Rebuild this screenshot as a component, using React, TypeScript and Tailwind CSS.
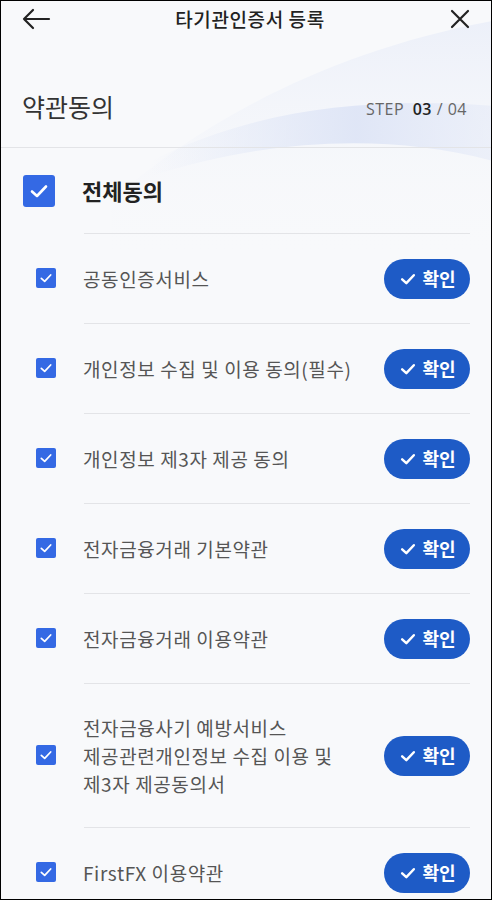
import React from 'react';

const terms: string[][] = [
  ['공동인증서비스'],
  ['개인정보 수집 및 이용 동의(필수)'],
  ['개인정보 제3자 제공 동의'],
  ['전자금융거래 기본약관'],
  ['전자금융거래 이용약관'],
  ['전자금융사기 예방서비스', '제공관련개인정보 수집 이용 및', '제3자 제공동의서'],
  ['FirstFX 이용약관'],
];

const Check = ({ size, stroke }: { size: number; stroke: number }) => (
  <svg width={size} height={size} viewBox="0 0 24 24" fill="none">
    <polyline points="5,12.5 10,17 19,7.5" stroke="white" strokeWidth={stroke} strokeLinecap="round" strokeLinejoin="round" />
  </svg>
);

const App = () => {
  return (
    <div
      className="relative w-[492px] h-[900px] overflow-hidden border border-black bg-[#f8f9fb]"
      style={{ fontFamily: '"Noto Sans CJK KR", "Noto Sans", sans-serif' }}
    >
      {/* background wave */}
      <svg className="absolute left-0 top-0 pointer-events-none" width="492" height="260" viewBox="0 0 492 260">
        <defs>
          <linearGradient id="w1" x1="0" y1="0" x2="1" y2="0">
            <stop offset="0" stopColor="#dfe6f7" stopOpacity="0" />
            <stop offset="0.6" stopColor="#dde4f6" stopOpacity="0.9" />
            <stop offset="1" stopColor="#e6ebf8" stopOpacity="0.6" />
          </linearGradient>
          <linearGradient id="w2" x1="0" y1="0" x2="0" y2="1">
            <stop offset="0" stopColor="#ebeff9" stopOpacity="0.9" />
            <stop offset="1" stopColor="#f8f9fb" stopOpacity="0" />
          </linearGradient>
        </defs>
        <path d="M110 200 C 200 120, 330 50, 492 20 L 492 260 L 110 260 Z" fill="url(#w2)" />
        <path d="M150 160 C 250 110, 360 95, 492 105 L 492 160 C 380 130, 260 140, 150 175 Z" fill="url(#w1)" />
      </svg>

      <div className="relative">
        {/* header */}
        <div className="flex items-center justify-between h-[36px] pl-[20px] pr-[20px]">
          <svg width="30" height="22" viewBox="0 0 30 22" fill="none">
            <path d="M28 11 H3 M12 2 L3 11 L12 20" stroke="#222" strokeWidth="2.2" strokeLinecap="round" strokeLinejoin="round" />
          </svg>
          <div className="text-[19px] font-medium text-[#222] tracking-[0.6px]">타기관인증서 등록</div>
          <svg width="22" height="22" viewBox="0 0 22 22" fill="none">
            <path d="M3 3 L19 19 M19 3 L3 19" stroke="#222" strokeWidth="2.2" strokeLinecap="round" />
          </svg>
        </div>

        {/* title */}
        <div className="flex items-end justify-between pl-[21px] pr-[24px] pt-[53px] pb-[25px]">
          <div className="text-[25px] text-[#333] leading-[32px]">약관동의</div>
          <div className="text-[16px] text-[#666] leading-[26px] tracking-[0.5px]" style={{ fontFamily: '"Open Sans", sans-serif' }}>
            STEP <span className="ml-[4px] font-semibold text-[#222]">03</span> / 04
          </div>
        </div>
        <div className="h-px bg-[#e3e4e7]" />

        {/* all agree */}
        <div className="flex items-center h-[85px] pl-[22px]">
          <div className="w-[32px] h-[32px] rounded-[3px] bg-[#3469e4] flex items-center justify-center">
            <Check size={24} stroke={2.6} />
          </div>
          <div className="ml-[27px] text-[22px] font-bold text-[#222]">전체동의</div>
        </div>

        {/* terms */}
        {terms.map((lines, i) => (
          <div key={i} className="flex items-stretch">
            <div className="w-[83px] shrink-0 flex items-center pl-[35px]">
              <div className="w-[20px] h-[20px] rounded-[2px] bg-[#3469e4] flex items-center justify-center">
                <Check size={16} stroke={2.6} />
              </div>
            </div>
            <div className="flex-1 mr-[21px] border-t border-[#e3e4e7] flex items-center justify-between py-[24.5px]">
              <div className="-ml-[1px] py-[5px] text-[19px] leading-[28px] tracking-[0.6px] text-[#555]">
                {lines.map((l, j) => (
                  <div key={j}>{l}</div>
                ))}
              </div>
              <button className="w-[86px] h-[40px] rounded-full bg-[#1e5bc6] flex items-center justify-center gap-[4px] text-white text-[18px] font-semibold shrink-0">
                <Check size={20} stroke={3} />
                <span>확인</span>
              </button>
            </div>
          </div>
        ))}
      </div>
    </div>
  );
};

export default App;
